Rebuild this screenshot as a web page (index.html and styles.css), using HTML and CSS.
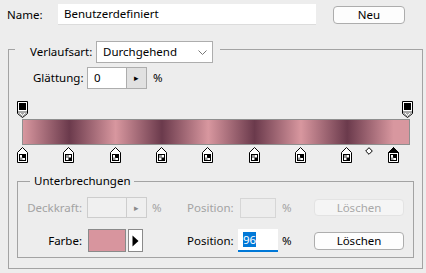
FILE: index.html
```html
<!DOCTYPE html>
<html lang="de">

<head>
  <meta charset="UTF-8">
  <title>Verlaufs-Editor</title>
  <link rel="stylesheet" href="styles.css">
</head>

<body>
  <div class="name-row">
    <label class="name-label">Name:</label>
    <div class="name-input">Benutzerdefiniert</div>
    <button class="button new-button">Neu</button>
  </div>

  <fieldset class="outer">
    <legend class="outer-legend">
      <span class="label">Verlaufsart:</span>
      <span class="select">Durchgehend
        <svg class="chevron" width="9" height="6" viewBox="0 0 9 6"><path d="M0.5 0.5 L4.5 4.5 L8.5 0.5" fill="none" stroke="#777"/></svg>
      </span>
    </legend>

    <div class="smooth-row">
      <span class="label">Glättung:</span>
      <span class="spin">
        <span class="spin-value">0</span>
        <span class="spin-arrow">&#9656;</span>
      </span>
      <span class="pct">%</span>
    </div>

    <!-- Verlaufsbalken mit Reglern -->
    <div class="gradient-editor">
      <svg class="stop top-stop" style="left: 8px" width="11" height="17" viewBox="0 0 11 17">
        <path d="M0.5 0.5 H10.5 V12.5 L5.5 16.5 L0.5 12.5 Z" fill="#fff" stroke="#000"/>
        <rect x="2" y="2" width="7" height="7" fill="#000"/>
        <path d="M1 10 H10 V12.3 L5.5 15.8 L1 12.3 Z" fill="#a8a8a8"/>
        <path d="M3 12 L5.5 14.5 L8 12" fill="none" stroke="#fff"/>
      </svg>
      <svg class="stop top-stop" style="left: 393px" width="11" height="17" viewBox="0 0 11 17">
        <path d="M0.5 0.5 H10.5 V12.5 L5.5 16.5 L0.5 12.5 Z" fill="#fff" stroke="#000"/>
        <rect x="2" y="2" width="7" height="7" fill="#000"/>
        <path d="M1 10 H10 V12.3 L5.5 15.8 L1 12.3 Z" fill="#a8a8a8"/>
        <path d="M3 12 L5.5 14.5 L8 12" fill="none" stroke="#fff"/>
      </svg>

      <div class="gradient-bar"></div>

      <svg class="stop color-stop" style="left: 8px" width="11" height="16" viewBox="0 0 11 16">
        <path d="M5.5 0.5 L10.5 5.5 V15.5 H0.5 V5.5 Z" fill="#fff" stroke="#000"/>
        <rect x="2.5" y="7.5" width="6" height="6" fill="#fff" stroke="#000"/>
        <rect x="5" y="8" width="3" height="3" fill="#000"/>
        <rect x="3" y="10.5" width="2.5" height="2.5" fill="#9a9a9a"/>
      </svg>
      <svg class="stop color-stop" style="left: 54px" width="11" height="16" viewBox="0 0 11 16">
        <path d="M5.5 0.5 L10.5 5.5 V15.5 H0.5 V5.5 Z" fill="#fff" stroke="#000"/>
        <rect x="2.5" y="7.5" width="6" height="6" fill="#fff" stroke="#000"/>
        <rect x="3" y="8" width="3" height="3" fill="#9a9a9a"/>
        <rect x="5.5" y="10.5" width="2.5" height="2.5" fill="#000"/>
      </svg>
      <svg class="stop color-stop" style="left: 101px" width="11" height="16" viewBox="0 0 11 16">
        <path d="M5.5 0.5 L10.5 5.5 V15.5 H0.5 V5.5 Z" fill="#fff" stroke="#000"/>
        <rect x="2.5" y="7.5" width="6" height="6" fill="#fff" stroke="#000"/>
        <rect x="5" y="8" width="3" height="3" fill="#000"/>
        <rect x="3" y="10.5" width="2.5" height="2.5" fill="#9a9a9a"/>
      </svg>
      <svg class="stop color-stop" style="left: 147px" width="11" height="16" viewBox="0 0 11 16">
        <path d="M5.5 0.5 L10.5 5.5 V15.5 H0.5 V5.5 Z" fill="#fff" stroke="#000"/>
        <rect x="2.5" y="7.5" width="6" height="6" fill="#fff" stroke="#000"/>
        <rect x="3" y="8" width="3" height="3" fill="#9a9a9a"/>
        <rect x="5.5" y="10.5" width="2.5" height="2.5" fill="#000"/>
      </svg>
      <svg class="stop color-stop" style="left: 193px" width="11" height="16" viewBox="0 0 11 16">
        <path d="M5.5 0.5 L10.5 5.5 V15.5 H0.5 V5.5 Z" fill="#fff" stroke="#000"/>
        <rect x="2.5" y="7.5" width="6" height="6" fill="#fff" stroke="#000"/>
        <rect x="5" y="8" width="3" height="3" fill="#000"/>
        <rect x="3" y="10.5" width="2.5" height="2.5" fill="#9a9a9a"/>
      </svg>
      <svg class="stop color-stop" style="left: 240px" width="11" height="16" viewBox="0 0 11 16">
        <path d="M5.5 0.5 L10.5 5.5 V15.5 H0.5 V5.5 Z" fill="#fff" stroke="#000"/>
        <rect x="2.5" y="7.5" width="6" height="6" fill="#fff" stroke="#000"/>
        <rect x="3" y="8" width="3" height="3" fill="#9a9a9a"/>
        <rect x="5.5" y="10.5" width="2.5" height="2.5" fill="#000"/>
      </svg>
      <svg class="stop color-stop" style="left: 286px" width="11" height="16" viewBox="0 0 11 16">
        <path d="M5.5 0.5 L10.5 5.5 V15.5 H0.5 V5.5 Z" fill="#fff" stroke="#000"/>
        <rect x="2.5" y="7.5" width="6" height="6" fill="#fff" stroke="#000"/>
        <rect x="5" y="8" width="3" height="3" fill="#000"/>
        <rect x="3" y="10.5" width="2.5" height="2.5" fill="#9a9a9a"/>
      </svg>
      <svg class="stop color-stop" style="left: 332px" width="11" height="16" viewBox="0 0 11 16">
        <path d="M5.5 0.5 L10.5 5.5 V15.5 H0.5 V5.5 Z" fill="#fff" stroke="#000"/>
        <rect x="2.5" y="7.5" width="6" height="6" fill="#fff" stroke="#000"/>
        <rect x="3" y="8" width="3" height="3" fill="#9a9a9a"/>
        <rect x="5.5" y="10.5" width="2.5" height="2.5" fill="#000"/>
      </svg>
      <svg class="stop midpoint" style="left: 356px" width="8" height="8" viewBox="0 0 8 8">
        <path d="M4 0.7 L7.3 4 L4 7.3 L0.7 4 Z" fill="#fff" stroke="#000"/>
      </svg>
      <!-- ausgewählter Regler -->
      <svg class="stop color-stop" style="left: 379px" width="11" height="16" viewBox="0 0 11 16">
        <path d="M5.5 0.5 L10.5 5.5 V15.5 H0.5 V5.5 Z" fill="#fff" stroke="#000"/>
        <path d="M5.5 0.5 L10.5 5.5 H0.5 Z" fill="#000" stroke="#000"/>
        <rect x="2.5" y="7.5" width="6" height="6" fill="#fff" stroke="#000"/>
        <rect x="5" y="8" width="3" height="3" fill="#000"/>
        <rect x="3" y="10.5" width="2.5" height="2.5" fill="#9a9a9a"/>
      </svg>
    </div>

    <fieldset class="inner">
      <legend class="inner-legend">Unterbrechungen</legend>

      <div class="stop-row opacity-row">
        <span class="row-label disabled">Deckkraft:</span>
        <span class="spin spin-disabled">
          <span class="spin-value"></span>
          <span class="spin-arrow">&#9656;</span>
        </span>
        <span class="pct pct-wide disabled">%</span>
        <span class="pos-label disabled">Position:</span>
        <span class="pos-wrap"><span class="pos-input pos-disabled"></span></span>
        <span class="pct2 disabled">%</span>
        <button class="button delete-button" disabled>Löschen</button>
      </div>

      <div class="stop-row color-row">
        <span class="row-label">Farbe:</span>
        <span class="color-group">
          <span class="swatch"></span>
          <span class="swatch-arrow">
            <svg width="7" height="12" viewBox="0 0 7 12"><path d="M0.5 0.5 L6.5 6 L0.5 11.5 Z" fill="#000"/></svg>
          </span>
        </span>
        <span class="pos-label">Position:</span>
        <span class="pos-wrap"><span class="pos-input pos-active"><span class="selected">96</span></span></span>
        <span class="pct2">%</span>
        <button class="button delete-button">Löschen</button>
      </div>
    </fieldset>
  </fieldset>
</body>

</html>
```

FILE: styles.css
```css
/* Grundlayout des Dialogs */
body {
  margin: 0;
  background-color: #ededed;
  color: #000;
  font-family: "Noto Sans", sans-serif;
  font-size: 11.5px;
  line-height: 16px;
  width: 426px;
  height: 273px;
  overflow: hidden;
}

.disabled {
  color: #a3a3a3;
}

/* Knoepfe */
.button {
  font-family: "Noto Sans", sans-serif;
  font-size: 11.5px;
  line-height: 14px;
  color: #000;
  background-color: #fdfdfd;
  border: 1px solid #adadad;
  border-radius: 4px;
  padding: 0;
  text-align: center;
}

.button:disabled {
  color: #a8a8a8;
  background-color: #f5f5f5;
  border-color: #e3e3e3;
}

/* Name-Zeile oben */
.name-row {
  display: flex;
  align-items: center;
  padding: 4px 0 0 7px;
}

.name-label {
  width: 51px;
}

.name-input {
  width: 258px;
  height: 21px;
  box-sizing: border-box;
  background-color: #fff;
  border-bottom: 1px solid #dcdcdc;
  padding: 2px 0 0 6px;
}

.new-button {
  margin-left: 17px;
  width: 72px;
  height: 18px;
}

/* Aeussere Gruppe */
.outer {
  margin: 11px 3px 0 8px;
  padding: 0;
  border: 1px solid #a3a3a3;
}

.outer-legend {
  display: flex;
  align-items: center;
  margin-left: 6px;
  padding: 5px 7px 0 15px;
}

.outer-legend .label {
  width: 62px;
  margin-right: 4px;
}

.select {
  display: flex;
  align-items: center;
  justify-content: space-between;
  width: 117px;
  height: 22px;
  box-sizing: border-box;
  background-color: #fff;
  border: 1px solid #adadad;
  padding: 0 5px 0 6px;
}

.chevron {
  margin-top: 1px;
}

/* Glaettung */
.smooth-row {
  display: flex;
  align-items: center;
  margin-top: 4px;
  padding-left: 24px;
}

.smooth-row .label {
  width: 48px;
}

.smooth-row .spin {
  margin-left: 6px;
}

.spin {
  display: flex;
  width: 60px;
  height: 22px;
  box-sizing: border-box;
  border: 1px solid #adadad;
  background-color: #fff;
}

.spin-value {
  width: 39px;
  padding-left: 6px;
  line-height: 20px;
  border-right: 1px solid #adadad;
  box-sizing: border-box;
}

.spin-arrow {
  flex: 1;
  background-color: #e1e1e1;
  text-align: center;
  font-size: 9px;
  line-height: 20px;
}

.pct {
  width: 35px;
  box-sizing: border-box;
  padding-left: 6px;
}

.pct-wide {
  width: 40px;
  padding-left: 5px;
}

/* Verlaufsbalken */
.gradient-editor {
  position: relative;
  height: 70px;
  margin-top: 8px;
}

.stop {
  position: absolute;
  display: block;
}

.top-stop {
  top: 4px;
}

.color-stop {
  top: 50px;
}

.midpoint {
  top: 50px;
}

.gradient-bar {
  position: relative;
  top: 22px;
  margin-left: 13px;
  width: 388px;
  height: 26px;
  box-sizing: border-box;
  border: 1px solid #8f8f8f;
  background: linear-gradient(to right,
      #d8979f 0%, #6b3a4c 12%, #d8979f 24%, #6b3a4c 36%, #d8979f 48%,
      #6b3a4c 60%, #d8979f 72%, #6b3a4c 84%, #d8979f 96%, #d8979f 100%);
}

/* Innere Gruppe Unterbrechungen */
.inner {
  margin: 6px 8px 10px 8px;
  padding: 0 0 5px 0;
  border: 1px solid #a3a3a3;
}

.inner-legend {
  margin-left: 12px;
  padding: 0 4px;
}

.stop-row {
  display: flex;
  align-items: center;
}

.opacity-row {
  margin-top: 8px;
  height: 21px;
}

.color-row {
  margin-top: 11px;
  height: 23px;
}

.row-label {
  width: 64px;
  margin-right: 5px;
  text-align: right;
}

.spin-disabled {
  height: 21px;
  background-color: #f0f0f0;
  border-color: #cdcdcd;
}

.spin-disabled .spin-value {
  border-right-color: #cdcdcd;
}

.spin-disabled .spin-arrow {
  background-color: #efefef;
  color: #8a8a8a;
  line-height: 19px;
}

.pos-label {
  width: 51px;
}

.pos-wrap {
  width: 44px;
}

.pos-input {
  display: block;
  box-sizing: border-box;
}

.pos-disabled {
  margin-left: 2px;
  width: 36px;
  height: 20px;
  border: 1px solid #d6d6d6;
}

.pos-active {
  width: 40px;
  height: 23px;
  background-color: #fff;
  border-bottom: 2px solid #0078d7;
  padding: 3px 0 0 5px;
}

.selected {
  background-color: #0078d7;
  color: #fff;
}

.pct2 {
  width: 32px;
}

.delete-button {
  width: 90px;
  height: 18px;
}

.opacity-row .delete-button {
  height: 17px;
}

/* Farbfeld */
.color-group {
  display: flex;
  width: 100px;
}

.swatch {
  margin-left: 1px;
  width: 38px;
  height: 23px;
  box-sizing: border-box;
  background-color: #d8959e;
  border: 1px solid #8a8a8a;
}

.swatch-arrow {
  display: flex;
  align-items: center;
  justify-content: center;
  margin-left: 2px;
  width: 15px;
  height: 23px;
  box-sizing: border-box;
  background-color: #fff;
  border: 1px solid #8a8a8a;
}
```
